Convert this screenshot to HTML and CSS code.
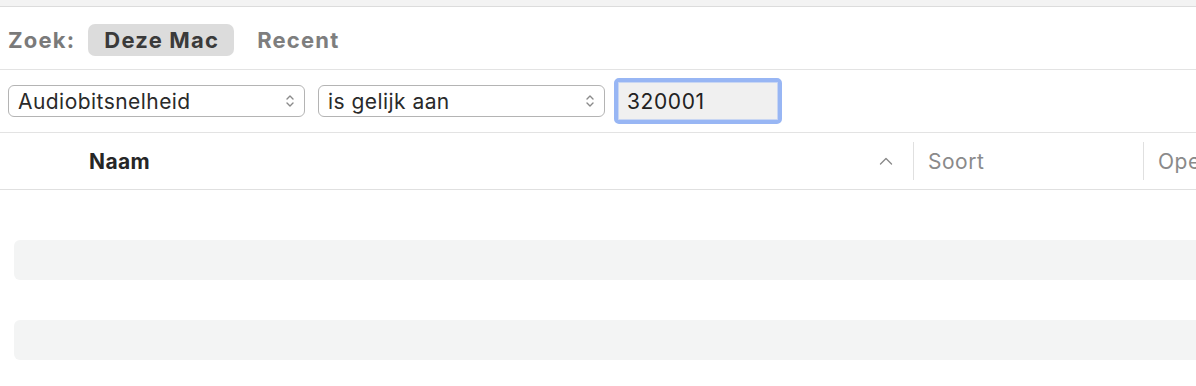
FILE: index.html
```html
<!DOCTYPE html>
<html>
<head>
<meta charset="utf-8">
<link rel="stylesheet" href="styles.css">
</head>
<body>
<div class="window">
  <div class="topstrip"></div>
  <div class="scope">
    <span class="scope-label">Zoek:</span>
    <span class="scope-btn active">Deze Mac</span>
    <span class="scope-btn">Recent</span>
  </div>
  <div class="filter">
    <div class="select sel1">
      <span>Audiobitsnelheid</span>
      <svg class="updown" width="10" height="14" viewBox="0 0 10 14"><path d="M2 5 L5 2 L8 5 M2 9 L5 12 L8 9" fill="none" stroke="#8a8a8a" stroke-width="1.4" stroke-linecap="round" stroke-linejoin="round"/></svg>
    </div>
    <div class="select sel2">
      <span>is gelijk aan</span>
      <svg class="updown" width="10" height="14" viewBox="0 0 10 14"><path d="M2 5 L5 2 L8 5 M2 9 L5 12 L8 9" fill="none" stroke="#8a8a8a" stroke-width="1.4" stroke-linecap="round" stroke-linejoin="round"/></svg>
    </div>
    <div class="field"><span>320001</span></div>
  </div>
  <div class="header">
    <div class="col col-name">
      <span class="name">Naam</span>
      <svg class="chev" width="14" height="8" viewBox="0 0 14 8"><path d="M1.5 7 L7 1.5 L12.5 7" fill="none" stroke="#8a8a8a" stroke-width="1.4" stroke-linecap="round" stroke-linejoin="round"/></svg>
    </div>
    <div class="sep"></div>
    <div class="col col-kind">Soort</div>
    <div class="sep"></div>
    <div class="col col-open">Open</div>
  </div>
  <div class="rows">
    <div class="row"></div>
    <div class="row stripe"></div>
    <div class="row"></div>
    <div class="row stripe"></div>
  </div>
</div>
</body>
</html>
```
FILE: styles.css
```css
html, body {
  margin: 0;
  padding: 0;
  background: #ffffff;
  overflow: hidden;
}
body {
  font-family: Inter, "Noto Sans", "Liberation Sans", sans-serif;
  width: 1196px;
  height: 386px;
}
.window {
  display: flex;
  flex-direction: column;
}
.topstrip {
  height: 6px;
  background: #f3f3f3;
  border-bottom: 1px solid #dcdcdc;
}
.scope {
  display: flex;
  align-items: center;
  padding-left: 8px;
  padding-top: 4px;
  border-bottom: 1px solid #e3e3e3;
  box-sizing: border-box;
  height: 63px;
}
.scope-label {
  font-size: 22px;
  font-weight: 700;
  letter-spacing: 1.2px;
  color: #7a7a7a;
  margin-right: 13px;
}
.scope-btn {
  font-size: 22px;
  font-weight: 700;
  letter-spacing: 1.2px;
  color: #7e7e7e;
  height: 32px;
  line-height: 32px;
  padding: 0 15px 0 16px;
  border-radius: 7px;
  margin-right: 7px;
}
.scope-btn.active {
  background: #dcdcdc;
  color: #3a3a3a;
}
.filter {
  height: 63px;
  box-sizing: border-box;
  border-bottom: 1px solid #e3e3e3;
  display: flex;
  align-items: center;
  padding-left: 8px;
}
.select {
  flex-shrink: 0;
  height: 32px;
  box-sizing: border-box;
  border: 1.5px solid #b4b4b4;
  border-radius: 6px;
  display: flex;
  align-items: center;
  justify-content: space-between;
  padding: 0 9px 0 9px;
  font-size: 21px;
  letter-spacing: 0.45px;
  color: #2a2a2a;
  background: #fff;
  margin-right: 13px;
}
.sel1 { width: 297px; }
.sel2 { width: 287px; margin-right: 9px; }
.updown { display: block; }
.field {
  flex-shrink: 0;
  width: 168px;
  height: 46px;
  box-sizing: border-box;
  border: 4px solid #98b6f4;
  border-radius: 5px;
  background: #f0f0f0;
  display: flex;
  align-items: center;
  padding-left: 9px;
  font-size: 21px;
  letter-spacing: 0.6px;
  color: #222;
  box-shadow: inset 0 0 0 1px #c8d6f3;
}
.header {
  height: 57px;
  box-sizing: border-box;
  border-bottom: 1px solid #e0e0e0;
  display: flex;
  align-items: center;
}
.col {
  flex-shrink: 0;
  font-size: 21px;
  letter-spacing: 0.5px;
  color: #8a8a8a;
  display: flex;
  align-items: center;
}
.col-name {
  width: 913px;
  padding-left: 89px;
  padding-right: 20px;
  box-sizing: border-box;
  justify-content: space-between;
}
.name {
  font-weight: 700;
  letter-spacing: 0.4px;
  color: #262626;
}
.sep {
  flex-shrink: 0;
  width: 1px;
  height: 38px;
  background: #e0e0e0;
}
.col-kind {
  width: 229px;
  padding-left: 14px;
  box-sizing: border-box;
}
.col-open {
  padding-left: 14px;
  white-space: nowrap;
}
.rows {
  display: flex;
  flex-direction: column;
  padding-left: 14px;
  padding-top: 10px;
}
.row {
  height: 40px;
}
.row.stripe {
  background: #f3f4f4;
  border-radius: 6px 0 0 6px;
}
```
